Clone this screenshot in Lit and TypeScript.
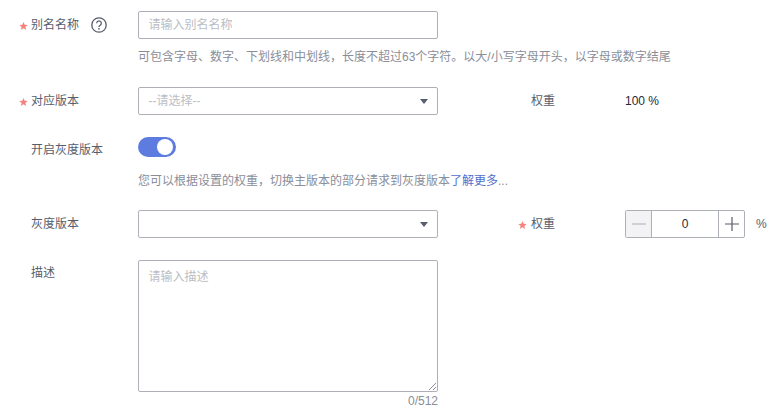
import { LitElement, html, css } from "lit";
import { customElement } from "lit/decorators.js";

const star = html`<svg class="mark" width="9" height="8" viewBox="0 0 10 9.5"><path d="M5 0l1.4 3.4 3.6.2-2.8 2.3 1 3.6L5 7.5 1.8 9.5l1-3.6L0 3.6l3.6-.2z" fill="#f6827e"></path></svg>`;

@customElement("app-root")
export class AppRoot extends LitElement {
  static styles = css`
    :host {
      display: block;
      width: 778px;
      height: 416px;
      box-sizing: border-box;
      padding-top: 11px;
      background: #fff;
      overflow: hidden;
      font-family: "Liberation Sans", "Noto Sans CJK SC", sans-serif;
      font-size: 12px;
      color: #575d6c;
    }
    .row { display: flex; align-items: flex-start; }
    .label {
      width: 138px;
      flex: none;
      height: 28px;
      line-height: 29px;
      display: flex;
      align-items: flex-start;
      padding-left: 19px;
      box-sizing: border-box;
    }
    .label.plain { padding-left: 31px; }
    .mark { flex: none; display: block; margin: 11px 3px 0 0; }
    .help { margin: 6px 0 0 12px; display: block; flex: none; }
    .field { width: 300px; flex: none; }
    .input {
      width: 300px;
      height: 28px;
      box-sizing: border-box;
      border: 1px solid #adb0b8;
      border-radius: 2px;
      padding: 0 10px 0 9.5px;
      display: flex;
      align-items: center;
      justify-content: space-between;
      color: #bbbdc3;
      background: #fff;
      line-height: 28px;
    }
    .caret {
      width: 0; height: 0;
      border-left: 4.5px solid transparent;
      border-right: 4.5px solid transparent;
      border-top: 5px solid #575d6c;
      margin-right: -1px;
    }
    .hint { color: #8a8e99; line-height: 16px; margin-top: 10px; white-space: nowrap; }
    .hint.wide { margin-top: 16px; }
    .hint a { color: #526ecc; text-decoration: none; }
    .side { display: flex; align-items: flex-start; height: 28px; margin-left: 80px; line-height: 29px; }
    .side-label { width: 107px; display: flex; align-items: flex-start; flex: none; box-sizing: border-box; }
    .side-label .mark { margin: 11px 4px 0 0; }
    .side-label.plain { padding-left: 13px; }
    .value { color: #252b3a; }
    .switch {
      width: 38px;
      height: 20px;
      border-radius: 10px;
      background: #5e7ce0;
      position: relative;
      flex: none;
    }
    .knob {
      position: absolute;
      top: 2px;
      right: 3px;
      width: 16px;
      height: 16px;
      border-radius: 50%;
      background: #fff;
    }
    .stepper {
      width: 120px;
      height: 28px;
      box-sizing: border-box;
      border: 1px solid #adb0b8;
      border-radius: 2px;
      display: flex;
      flex: none;
    }
    .step { width: 26px; flex: none; display: flex; align-items: center; justify-content: center; box-sizing: border-box; }
    .step.minus { background: #f3f3f5; border-right: 1px solid #adb0b8; }
    .step.plus { border-left: 1px solid #adb0b8; }
    .num { flex: 1; text-align: center; line-height: 26px; color: #252b3a; }
    .unit { margin-left: 11px; color: #575d6c; }
    .textarea {
      width: 300px;
      height: 132px;
      box-sizing: border-box;
      border: 1px solid #adb0b8;
      border-radius: 2px;
      padding: 7px 9.5px;
      line-height: 18px;
      color: #bbbdc3;
      position: relative;
    }
    .grip { position: absolute; right: 0; bottom: 0; display: block; }
    .count { text-align: right; color: #8a8e99; line-height: 14px; margin-top: 2px; }
    .r2 { margin-top: 22px; }
    .r3 { margin-top: 22px; }
    .r3 .label { height: 24px; line-height: 27px; }
    .r4 { margin-top: 21px; }
    .r5 { margin-top: 22px; }
    .r5 .label { line-height: 27px; }
  `;

  render() {
    return html`
      <div class="row">
        <div class="label">${star}别名名称
          <svg class="help" width="16" height="16" viewBox="0 0 16 16">
            <circle cx="8" cy="8" r="7.2" fill="none" stroke="#575d6c" stroke-width="1.3"></circle>
            <path d="M5.7 6.2a2.3 2.3 0 1 1 3.5 2c-.8.5-1.2.9-1.2 1.7" fill="none" stroke="#575d6c" stroke-width="1.3"></path>
            <circle cx="8" cy="11.8" r=".85" fill="#575d6c"></circle>
          </svg>
        </div>
        <div class="field">
          <div class="input">请输入别名名称</div>
          <div class="hint">可包含字母、数字、下划线和中划线，长度不超过63个字符。以大/小写字母开头，以字母或数字结尾</div>
        </div>
      </div>
      <div class="row r2">
        <div class="label">${star}对应版本</div>
        <div class="field"><div class="input">--请选择--<span class="caret"></span></div></div>
        <div class="side">
          <div class="side-label plain">权重</div>
          <span class="value">100 %</span>
        </div>
      </div>
      <div class="row r3">
        <div class="label plain">开启灰度版本</div>
        <div class="field">
          <div class="switch"><span class="knob"></span></div>
          <div class="hint wide">您可以根据设置的权重，切换主版本的部分请求到灰度版本<a>了解更多</a>...</div>
        </div>
      </div>
      <div class="row r4">
        <div class="label plain">灰度版本</div>
        <div class="field"><div class="input"><span></span><span class="caret"></span></div></div>
        <div class="side">
          <div class="side-label">${star}权重</div>
          <div class="stepper">
            <div class="step minus"><svg width="14" height="2"><rect width="14" height="1" y="0.5" fill="#adb0b8"></rect></svg></div>
            <div class="num">0</div>
            <div class="step plus"><svg width="14" height="14"><path d="M0 7h14M7 0v14" stroke="#575d6c" stroke-width="1.2"></path></svg></div>
          </div>
          <span class="unit">%</span>
        </div>
      </div>
      <div class="row r5">
        <div class="label plain">描述</div>
        <div class="field">
          <div class="textarea">请输入描述
            <svg class="grip" width="9" height="9"><path d="M1 8L8 1M5 8L8 5" stroke="#8a8e99" stroke-width="1"></path></svg>
          </div>
          <div class="count">0/512</div>
        </div>
      </div>
    `;
  }
}
